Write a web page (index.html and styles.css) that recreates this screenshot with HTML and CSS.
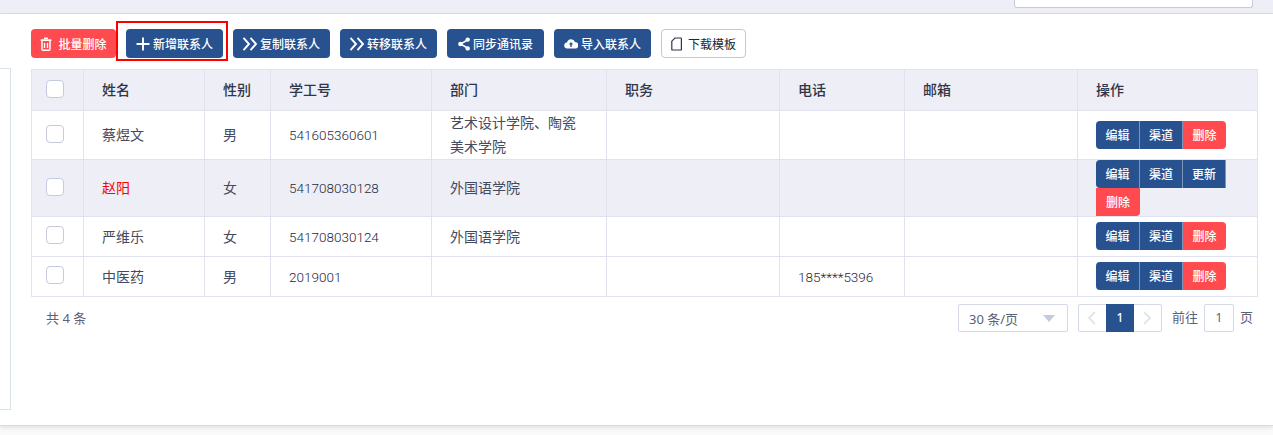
FILE: index.html
```html
<!DOCTYPE html>
<html lang="zh-CN">
<head>
<meta charset="utf-8">
<title>联系人</title>
<link rel="stylesheet" href="styles.css">
</head>
<body>
<header class="topbar"><div class="search"></div></header>
<main class="page">
  <aside class="tree"></aside>
  <section class="content">
    <div class="toolbar">
      <button class="btn danger"><svg class="ic trash" viewBox="0 0 12 14"><path d="M4 1.200h4M.6 3.200h10.800" stroke="#fff" stroke-width="1.600" fill="none"/><path d="M2 3.200h8v9a1 1 0 0 1-1 1H3a1 1 0 0 1-1-1z" fill="none" stroke="#fff" stroke-width="1.500"/><path d="M4.500 6v5M7.500 6v5" stroke="#fff" stroke-width="1.300"/></svg>批量删除</button>
      <div class="hl"><button class="btn primary"><svg class="ic" viewBox="0 0 14 14"><path d="M7 .5v13M.5 7h13" stroke="#fff" stroke-width="1.900" fill="none"/></svg>新增联系人</button></div>
      <button class="btn primary"><svg class="ic wide" viewBox="0 0 16 14"><path d="M1.500 .8 7 7l-5.500 6.200M8.500 .8 14 7l-5.500 6.200" stroke="#fff" stroke-width="1.900" fill="none"/></svg>复制联系人</button>
      <button class="btn primary"><svg class="ic wide" viewBox="0 0 16 14"><path d="M1.500 .8 7 7l-5.500 6.200M8.500 .8 14 7l-5.500 6.200" stroke="#fff" stroke-width="1.900" fill="none"/></svg>转移联系人</button>
      <button class="btn primary"><svg class="ic share" viewBox="0 0 12 14"><path d="M9.500 3 2.500 7l7 4" stroke="#fff" stroke-width="1.500" fill="none"/><circle cx="9.700" cy="2.600" r="2.200" fill="#fff"/><circle cx="2.400" cy="7" r="2.300" fill="#fff"/><circle cx="9.700" cy="11.400" r="2.200" fill="#fff"/></svg>同步通讯录</button>
      <button class="btn primary"><svg class="ic" viewBox="0 0 14 14"><path d="M3.500 11.500a3 3 0 0 1-.5-6 4.200 4.200 0 0 1 8-.6 3.300 3.300 0 0 1 0 6.600z" fill="#fff"/><path d="M7 5 4.800 7.500h1.500v2.500h1.400V7.500h1.500z" fill="#27528f"/></svg>导入联系人</button>
      <button class="btn plain"><svg class="ic file" viewBox="0 0 11 14"><path d="M4 1h5.800a.6.600 0 0 1 .6.600v10.800a.6.600 0 0 1-.6.600H1.400a.6.600 0 0 1-.6-.6V4.200z" fill="none" stroke="#303547" stroke-width="1.200"/></svg>下载模板</button>
    </div>
    <table class="grid">
      <colgroup><col class="c1"><col class="c2"><col class="c3"><col class="c4"><col class="c5"><col class="c6"><col class="c7"><col class="c8"><col class="c9"></colgroup>
      <thead>
        <tr class="r-head"><th><span class="check"></span></th><th>姓名</th><th>性别</th><th>学工号</th><th>部门</th><th>职务</th><th>电话</th><th>邮箱</th><th>操作</th></tr>
      </thead>
      <tbody>
        <tr class="r-a"><td><span class="check"></span></td><td>蔡煜文</td><td>男</td><td class="digits">541605360601</td><td class="wrap">艺术设计学院、陶瓷美术学院</td><td></td><td></td><td></td><td><div class="ops"><a class="op first">编辑</a><a class="op">渠道</a><a class="op del last">删除</a></div></td></tr>
        <tr class="r-b hover"><td><span class="check"></span></td><td class="red">赵阳</td><td>女</td><td class="digits">541708030128</td><td>外国语学院</td><td></td><td></td><td></td><td><div class="ops"><a class="op first">编辑</a><a class="op">渠道</a><a class="op edge">更新</a><a class="op del solo">删除</a></div></td></tr>
        <tr class="r-c"><td><span class="check"></span></td><td>严维乐</td><td>女</td><td class="digits">541708030124</td><td>外国语学院</td><td></td><td></td><td></td><td><div class="ops"><a class="op first">编辑</a><a class="op">渠道</a><a class="op del last">删除</a></div></td></tr>
        <tr class="r-c"><td><span class="check"></span></td><td>中医药</td><td>男</td><td class="digits">2019001</td><td></td><td></td><td class="digits">185****5396</td><td></td><td><div class="ops"><a class="op first">编辑</a><a class="op">渠道</a><a class="op del last">删除</a></div></td></tr>
      </tbody>
    </table>
    <div class="pager">
      <span class="total">共 4 条</span>
      <div class="select"><span>30 条/页</span><i class="caret"></i></div>
      <div class="pages">
        <span class="arrow"><svg viewBox="0 0 10 14" class="chev"><path d="M8 1 2 7l6 6" fill="none" stroke="#e3e4ea" stroke-width="1.800"/></svg></span>
        <span class="num">1</span>
        <span class="arrow"><svg viewBox="0 0 10 14" class="chev"><path d="M2 1l6 6-6 6" fill="none" stroke="#e3e4ea" stroke-width="1.800"/></svg></span>
      </div>
      <span class="goto">前往</span><span class="jump">1</span><span class="goto">页</span>
    </div>
  </section>
</main>
</body>
</html>
```
FILE: styles.css
```css
* { box-sizing: border-box; }
html { background: #fafafa; }
body {
  margin: 0;
  height: 435px;
  overflow: hidden;
  font-family: "Noto Sans", "Noto Sans CJK SC", sans-serif;
  font-size: 13px;
  color: #303547;
}
.topbar {
  height: 14px;
  background: #edeef6;
  border-bottom: 1px solid #d9dbe6;
  display: flex;
  justify-content: flex-end;
  padding-right: 20px;
}
.search {
  width: 239px;
  height: 8px;
  background: #fff;
  border: 1px solid #c5cade;
  border-top: 0;
  border-radius: 0 0 3px 3px;
}
.page {
  height: 412px;
  background: #fff;
  display: flex;
  border-bottom: 1px solid #d5d8e5;
  box-shadow: 0 2px 4px rgba(60, 65, 90, .12);
}
.tree {
  width: 11px;
  height: 342px;
  margin-top: 54px;
  border: 1px solid #d6e4ea;
  border-left: 0;
}
.content { width: 1226px; margin-left: 20px; }
.toolbar {
  height: 55px;
  padding-top: 15px;
  display: flex;
  align-items: flex-start;
  gap: 10px;
}
.btn {
  height: 29px;
  padding: 0;
  border: 0;
  border-radius: 4px;
  font: 500 12px "Noto Sans", "Noto Sans CJK SC", sans-serif;
  color: #fff;
  display: flex;
  align-items: center;
  justify-content: center;
  gap: 3px;
  width: 97px;
}
.primary { background: #27528f; }
.danger { background: #ff4b4f; width: 85px; gap: 6px; }
.plain { background: #fff; border: 1px solid #c6c8cf; color: #222632; width: 85px; font-weight: 400; gap: 6px; }
.hl {
  margin: -8px -5px 0 -10px;
  padding: 6px 3px 1px 8px;
  height: 40px;
  border: 2px solid #f00;
  display: flex;
}
.ic { width: 14px; height: 14px; flex: none; }
.wide { width: 16px; margin-left: -1px; margin-right: -1px; }
.trash { width: 12px; height: 14px; }
.share { width: 12px; height: 14px; }
.file { width: 11px; height: 14px; }
.grid {
  table-layout: fixed;
  border-collapse: collapse;
  width: 1226px;
  color: #454a5c;
}
.c1 { width: 52px; } .c2 { width: 121px; } .c3 { width: 66px; } .c4 { width: 161px; }
.c5 { width: 175px; } .c6 { width: 173px; } .c7 { width: 125px; } .c8 { width: 173px; } .c9 { width: 180px; }
.grid th, .grid td {
  border: 1px solid #e0e3ee;
  padding: 0 18px;
  text-align: left;
  font-size: 14px;
  line-height: 20px;
  vertical-align: middle;
}
.grid th { font-weight: 500; color: #303547; background: #edeef6; }
.grid th:first-child, .grid td:first-child { padding: 0 0 0 14px; }
.r-head { height: 41px; }
.r-a { height: 49px; }
.r-b { height: 57px; }
.r-c { height: 40px; }
.r-c .ops { margin-top: -2px; }
.hover td { background: #edeef6; }
.grid .wrap { line-height: 24px; }
.grid .digits { font-family: Roboto, sans-serif; font-size: 13.5px; font-weight: 300; color: #262a3c; }
.red { color: #f00; }
.check {
  display: block;
  width: 18px;
  height: 18px;
  margin-top: -3px;
  background: #fff;
  border: 1px solid #c5cade;
  border-radius: 4px;
}
.ops { display: flex; flex-wrap: wrap; width: 130px; }
.op {
  width: 43px;
  height: 28px;
  line-height: 30px;
  text-align: center;
  font-size: 12px;
  font-weight: 500;
  color: #fff;
  background: #27528f;
  border-right: 1px solid #7d94ba;
}
.first { border-radius: 4px 0 0 4px; width: 44px; }
.del { background: #ff4b4f; border-right: 0; }
.last { border-radius: 0 4px 4px 0; }
.solo { border-radius: 0 0 4px 0; width: 44px; }
.pager {
  height: 42px;
  padding: 7px 0 0 15px;
  display: flex;
  align-items: flex-start;
  color: #5c6174;
  font-size: 13px;
}
.total { line-height: 28px; margin-right: auto; }
.select {
  width: 110px;
  height: 28px;
  padding: 0 12px 0 10px;
  border: 1px solid #d5d9e7;
  border-radius: 2px;
  display: flex;
  align-items: center;
  justify-content: space-between;
  color: #5c6174;
  font-size: 13px;
}
.caret { border: 6px solid transparent; border-top: 7px solid #c5cade; border-bottom: 0; }
.pages {
  width: 84px;
  height: 28px;
  margin-left: 10px;
  border: 1px solid #d5d9e7;
  border-radius: 2px;
  display: flex;
}
.arrow { flex: 1; display: flex; align-items: center; justify-content: center; }
.chev { width: 10px; height: 14px; }
.num { width: 28px; background: #27528f; color: #fff; text-align: center; line-height: 28px; font-size: 12px; font-weight: 500; height: 28px; margin-top: -1px; }
.goto { line-height: 26px; margin-left: 10px; }
.jump { width: 30px; height: 28px; margin-left: 6px; border: 1px solid #d5d9e7; border-radius: 2px; text-align: center; line-height: 26px; font-size: 12px; }
.jump + .goto { margin-left: 6px; margin-right: 4px; }
```
